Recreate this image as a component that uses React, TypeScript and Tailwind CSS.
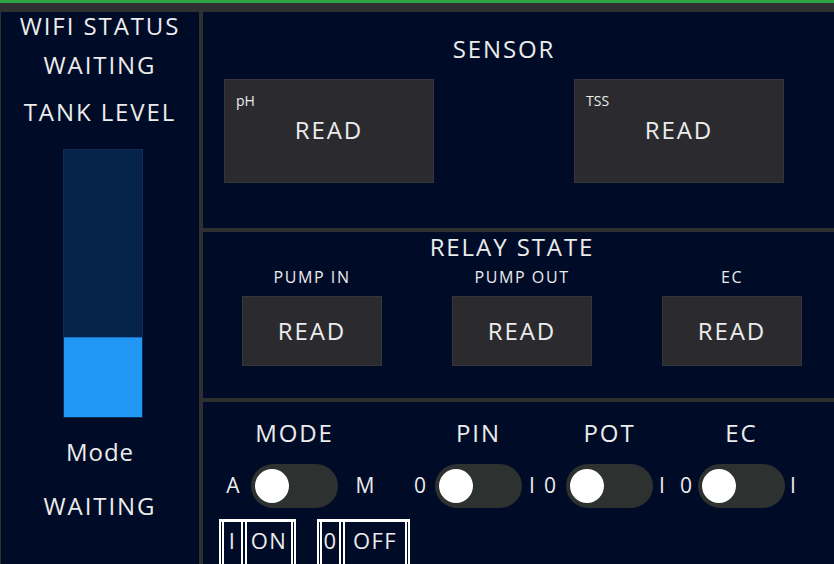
import React from 'react';

const Toggle: React.FC = () => {
  return (
    <div className="w-[87px] h-[44px] rounded-full bg-[#2d312f] flex items-center pl-[4px]">
      <div className="w-[34px] h-[34px] rounded-full bg-white" />
    </div>
  );
};

const SensorBox: React.FC<{ label: string }> = ({ label }) => {
  return (
    <div className="w-[210px] h-[104px] bg-[#2b2b2f] border border-[#34363a] flex flex-col">
      <div className="pl-[11px] pt-[13px] text-[14px] leading-[16px]">{label}</div>
      <div className="mt-[7px] text-center text-[24px] leading-[28px] tracking-[0.08em]">READ</div>
    </div>
  );
};

const RelayCol: React.FC<{ label: string }> = ({ label }) => {
  return (
    <div className="w-[140px] flex flex-col items-center">
      <div className="text-[16px] leading-[20px] tracking-[0.1em]">{label}</div>
      <div className="mt-[9px] w-[140px] h-[70px] bg-[#2b2b2f] border border-[#34363a] flex items-center justify-center text-[24px] tracking-[0.08em]">
        READ
      </div>
    </div>
  );
};

const Side: React.FC<{ text: string; className?: string }> = ({ text, className }) => {
  return (
    <div className={`w-[16px] h-[44px] flex items-center justify-center text-[21px] ${className ?? ''}`}>{text}</div>
  );
};

const Header: React.FC<{ title: string }> = ({ title }) => {
  return (
    <div className="flex flex-col items-center">
      <div className="text-[24px] leading-[28px] tracking-[0.08em]">{title}</div>
      <div className="mt-[17px]">
        <Toggle />
      </div>
    </div>
  );
};

const Switch: React.FC<{ key1: string; label: string; w: string }> = ({ key1, label, w }) => {
  return (
    <div className="h-[50px] border-x-2 border-t-[3px] border-white flex px-[1px] gap-[2px]">
      <div className="w-[21px] border-x-2 border-white flex justify-center pt-[5px]">{key1}</div>
      <div className={`${w} border-x-2 border-white flex justify-center pt-[5px]`}>{label}</div>
    </div>
  );
};

export default function App() {
  return (
    <div className="w-[834px] h-[564px] overflow-hidden bg-[#2d302e] flex flex-col font-['Open_Sans',sans-serif] text-[#ececec]">
      <div className="h-[3px] shrink-0 bg-[#2fa344]" />
      <div className="h-[9px] shrink-0" />
      <div className="flex flex-1 min-h-0">
        {/* left status panel */}
        <div className="ml-[1px] w-[198px] bg-[#000b27] flex flex-col items-center text-[24px] leading-[28px] tracking-[0.08em]">
          <div>WIFI STATUS</div>
          <div className="mt-[11px]">WAITING</div>
          <div className="mt-[19px]">TANK LEVEL</div>
          <div className="mt-[23px] ml-[5px] w-[80px] h-[269px] shrink-0 bg-[#062449] border border-[#0d2d57] flex flex-col justify-end">
            <div className="h-[80px] bg-[#2196f3] border-t border-[#1a6fc0]" />
          </div>
          <div className="mt-[20px] tracking-[0.04em]">Mode</div>
          <div className="mt-[26px]">WAITING</div>
        </div>

        <div className="ml-[4px] flex-1 flex flex-col gap-[4px] min-h-0">
          {/* sensor */}
          <div className="h-[216px] shrink-0 bg-[#000b27] pt-[23px]">
            <div className="ml-[21px] w-[560px]">
              <div className="text-center text-[24px] leading-[28px] tracking-[0.08em]">SENSOR</div>
              <div className="mt-[16px] flex justify-between">
                <SensorBox label="pH" />
                <SensorBox label="TSS" />
              </div>
            </div>
          </div>

          {/* relay */}
          <div className="h-[166px] shrink-0 bg-[#000b27] pt-[1px]">
            <div className="pr-[13px] text-center text-[24px] leading-[28px] tracking-[0.08em]">RELAY STATE</div>
            <div className="mt-[6px] ml-[39px] flex gap-[70px]">
              <RelayCol label="PUMP IN" />
              <RelayCol label="PUMP OUT" />
              <RelayCol label="EC" />
            </div>
          </div>

          {/* controls */}
          <div className="flex-1 min-h-0 overflow-hidden bg-[#000b27] pt-[17px]">
            <div className="pl-[22px] flex items-end">
              <Side text="A" className="mr-[10px]" />
              <Header title="MODE" />
              <Side text="M" className="ml-[19px]" />
              <Side text="0" className="ml-[39px] mr-[7px]" />
              <Header title="PIN" />
              <Side text="I" className="ml-[2px]" />
              <Side text="0" className="ml-[2px] mr-[8px]" />
              <Header title="POT" />
              <Side text="I" className="ml-[1px]" />
              <Side text="0" className="ml-[8px] mr-[4px]" />
              <Header title="EC" />
              <Side text="I" />
            </div>
            <div className="mt-[11px] ml-[16px] flex gap-[21px] text-[22px] leading-[26px] tracking-[0.06em]">
              <Switch key1="I" label="ON" w="w-[48px]" />
              <Switch key1="0" label="OFF" w="w-[64px]" />
            </div>
          </div>
        </div>
      </div>
    </div>
  );
}
